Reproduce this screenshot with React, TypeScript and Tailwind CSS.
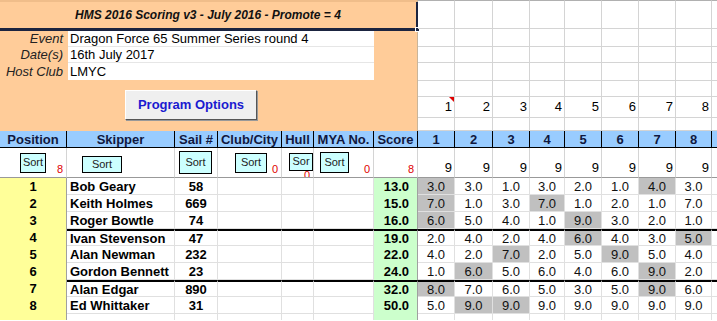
import * as React from "react";

const GRID =
  "grid grid-cols-[67px_108px_43px_64px_32px_60px_44px_37px_38px_37px_35px_37px_37px_37px_36px_1fr]";
const RACE_GRID = "grid grid-cols-[37px_38px_37px_35px_37px_37px_37px_36px_1fr]";

const headers = ["Position", "Skipper", "Sail #", "Club/City", "Hull", "MYA No.", "Score"];

const results = [
  { pos: 1, name: "Bob Geary", sail: "58", score: "13.0", r: ["3.0", "3.0", "1.0", "3.0", "2.0", "1.0", "4.0", "3.0"], d: [0, 6] },
  { pos: 2, name: "Keith Holmes", sail: "669", score: "15.0", r: ["7.0", "1.0", "3.0", "7.0", "1.0", "2.0", "1.0", "7.0"], d: [0, 3] },
  { pos: 3, name: "Roger Bowtle", sail: "74", score: "16.0", r: ["6.0", "5.0", "4.0", "1.0", "9.0", "3.0", "2.0", "1.0"], d: [0, 4] },
  { pos: 4, name: "Ivan Stevenson", sail: "47", score: "19.0", r: ["2.0", "4.0", "2.0", "4.0", "6.0", "4.0", "3.0", "5.0"], d: [4, 7] },
  { pos: 5, name: "Alan Newman", sail: "232", score: "22.0", r: ["4.0", "2.0", "7.0", "2.0", "5.0", "9.0", "5.0", "4.0"], d: [2, 5] },
  { pos: 6, name: "Gordon Bennett", sail: "23", score: "24.0", r: ["1.0", "6.0", "5.0", "6.0", "4.0", "6.0", "9.0", "2.0"], d: [1, 6] },
  { pos: 7, name: "Alan Edgar", sail: "890", score: "32.0", r: ["8.0", "7.0", "6.0", "5.0", "3.0", "5.0", "9.0", "6.0"], d: [0, 6] },
  { pos: 8, name: "Ed Whittaker", sail: "31", score: "50.0", r: ["5.0", "9.0", "9.0", "9.0", "9.0", "9.0", "9.0", "9.0"], d: [1, 2] },
];

const races = [1, 2, 3, 4, 5, 6, 7, 8];

function SortBtn({ className, label = "Sort" }: { className: string; label?: string }) {
  return (
    <div
      className={
        "relative z-10 bg-[#ccffff] border border-black text-[11px] leading-none text-[#222] flex justify-center " +
        className
      }
    >
      {label}
    </div>
  );
}

function Red({ v, className = "bottom-[2px]" }: { v: string; className?: string }) {
  return <span className={"absolute right-[3px] text-[11px] leading-none text-[#e00000] " + className}>{v}</span>;
}

export default function App() {
  const topRows = ["h-[29px]", "h-[18px]", "h-[16px]", "h-[18px]", "h-[16px]", "h-[17px]", "h-[17px]"];

  return (
    <div className="w-[717px] h-[321px] overflow-hidden bg-white text-black font-[family-name:Liberation_Sans,Arial,sans-serif]">
      {/* top section */}
      <div className="flex h-[131px]">
        <div className="relative w-[418px] bg-[#ffcc99] border-r border-[#c9b59a] flex flex-col">
          <div className="h-[2px] bg-[#f0bd8a]" />
          <div className="h-[29px] -mr-[1px] flex items-center justify-center border-r-2 border-b-[3px] border-[#1b2440] text-[12px] font-bold italic text-[#111]">
            HMS 2016 Scoring v3 - July 2016 - Promote = 4
          </div>
          <div className="absolute left-[415px] top-[27px] w-[5px] h-[5px] bg-[#1b2440] border border-white" />
          <div className="flex flex-col text-[13px]">
            <div className="flex h-[16px] leading-[16px]">
              <div className="w-[68px] pr-[5px] text-right italic text-[#222]">Event</div>
              <div className="w-[306px] bg-white pl-[2px] border-b border-[#e6e6e6]">Dragon Force 65 Summer Series round 4</div>
            </div>
            <div className="flex h-[16px] leading-[16px]">
              <div className="w-[68px] pr-[5px] text-right italic text-[#222]">Date(s)</div>
              <div className="w-[306px] bg-white pl-[2px] border-b border-[#e6e6e6]">16th July 2017</div>
            </div>
            <div className="flex h-[17px] leading-[17px]">
              <div className="w-[68px] pr-[5px] text-right italic text-[#222]">Host Club</div>
              <div className="w-[306px] bg-white pl-[2px]">LMYC</div>
            </div>
          </div>
          <div className="pl-[125px] pt-[10px]">
            <div className="w-[132px] h-[30px] bg-[#efefef] border border-t-white border-l-white border-r-[#555] border-b-[#555] shadow-[1px_1px_0_#999] flex items-center justify-center text-[13px] font-bold text-[#1a1ad0]">
              Program Options
            </div>
          </div>
        </div>
        <div className="flex-1 flex flex-col">
          {topRows.map((h, ri) => (
            <div key={ri} className={RACE_GRID + " " + h}>
              {races.map((n) => (
                <div
                  key={n}
                  className={
                    "relative border-r border-b border-[#d4d4d4] flex items-center justify-end pr-[2px] text-[13px] " +
                    (ri === 0 ? "border-t border-t-[#b0b0b0]" : "")
                  }
                >
                  {ri === 5 && n}
                  {ri === 5 && n === 1 && (
                    <span className="absolute top-0 right-0 w-0 h-0 border-l-[5px] border-l-transparent border-t-[5px] border-t-[#e00000]" />
                  )}
                </div>
              ))}
              <div className={"border-b border-[#d4d4d4] " + (ri === 0 ? "border-t border-t-[#b0b0b0]" : "")} />
            </div>
          ))}
        </div>
      </div>

      {/* header row */}
      <div className={GRID + " h-[17px] bg-[#99ccff] text-[13px] font-bold text-[#101840] leading-none"}>
        {headers.map((h) => (
          <div key={h} className="border-r border-b border-black flex items-center justify-center whitespace-nowrap">
            {h}
          </div>
        ))}
        {races.map((n) => (
          <div key={n} className="border-r border-b border-black flex items-center justify-center">
            {n}
          </div>
        ))}
        <div className="border-b border-black" />
      </div>

      {/* sort row */}
      <div className={GRID + " h-[30px] text-[13px]"}>
        <div className="relative border-r border-b border-[#d4d4d4] border-b-[#999] flex items-center justify-center">
          <SortBtn className="w-[26px] h-[20px] items-center" />
          <Red v="8" />
        </div>
        <div className="relative border-r border-b border-[#d4d4d4] border-b-[#999] flex items-center pl-[15px]">
          <SortBtn className="w-[40px] h-[17px] mt-[4px] items-center" />
        </div>
        <div className="relative border-r border-b border-[#d4d4d4] border-b-[#999] flex items-center pl-[4px]">
          <SortBtn className="w-[33px] h-[23px] items-center" />
        </div>
        <div className="relative border-r border-b border-[#d4d4d4] border-b-[#999] flex items-center pl-[17px]">
          <SortBtn className="w-[32px] h-[20px] items-center" />
          <Red v="0" />
        </div>
        <div className="relative overflow-hidden border-r border-b border-[#d4d4d4] border-b-[#999] flex items-center pl-[7px]">
          <Red v="0" className="-bottom-[4px]" />
          <SortBtn className="w-[26px] h-[18px] items-start pt-[2px] -mt-[2px]" label="Sor" />
        </div>
        <div className="relative border-r border-b border-[#d4d4d4] border-b-[#999] flex items-center pl-[6px]">
          <SortBtn className="w-[29px] h-[21px] items-center" />
          <Red v="0" />
        </div>
        <div className="relative border-r border-b border-[#d4d4d4] border-b-[#999]">
          <Red v="8" />
        </div>
        {races.map((n) => (
          <div key={n} className="border-r border-b border-[#d4d4d4] border-b-[#999] flex items-end justify-end pr-[2px] pb-[3px] leading-none">
            9
          </div>
        ))}
        <div className="border-b border-[#999]" />
      </div>

      {/* results */}
      {results.map((row, i) => {
        const thick = i === 3 || i === 6 ? " border-t-2 border-t-black" : "";
        return (
          <div key={row.pos} className={GRID + " h-[17px] text-[13px] leading-none"}>
            <div className="bg-[#ffff99] border-r border-[#a0a0a0] flex items-center justify-center font-bold">{row.pos}</div>
            <div className={"border-r border-b border-[#e0e0e0] flex items-center pl-[3px] font-bold whitespace-nowrap" + thick}>
              {row.name}
            </div>
            <div className={"border-r border-b border-[#e0e0e0] flex items-center justify-center font-bold" + thick}>{row.sail}</div>
            <div className={"border-r border-b border-[#e0e0e0]" + thick} />
            <div className={"border-r border-b border-[#e0e0e0]" + thick} />
            <div className={"border-r border-b border-[#e0e0e0]" + thick} />
            <div className={"bg-[#ccffcc] border-r border-[#a0a0a0] flex items-center justify-end pr-[8px] font-bold" + thick}>
              {row.score}
            </div>
            {row.r.map((v, j) => (
              <div
                key={j}
                className={
                  "border-r border-b border-[#e0e0e0] flex items-center justify-center text-[#111] " +
                  (row.d.includes(j) ? "bg-[#c0c0c0]" : "bg-white") +
                  thick
                }
              >
                {v}
              </div>
            ))}
            <div className={"border-b border-[#e0e0e0]" + thick} />
          </div>
        );
      })}
      <div className={GRID + " h-[6px]"}>
        <div className="bg-[#ffff99] border-r border-[#a0a0a0]" />
        <div className="border-r border-[#e0e0e0]" />
        <div className="border-r border-[#e0e0e0]" />
        <div className="border-r border-[#e0e0e0]" />
        <div className="border-r border-[#e0e0e0]" />
        <div className="border-r border-[#e0e0e0]" />
        <div className="bg-[#ccffcc] border-r border-[#a0a0a0]" />
        {races.map((n) => (
          <div key={n} className="border-r border-[#e0e0e0]" />
        ))}
        <div />
      </div>
    </div>
  );
}
